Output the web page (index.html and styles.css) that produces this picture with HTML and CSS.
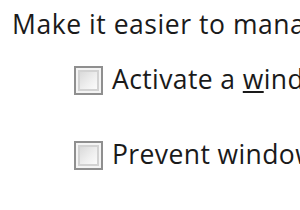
FILE: index.html
```html
<!DOCTYPE html>
<html lang="en">
<head>
    <meta charset="UTF-8">
    <title>Ease of Access</title>
    <link rel="stylesheet" href="styles.css">
</head>
<body>
    <div class="panel">
        <div class="heading">Make it easier to manage windows</div>
        <div class="option first">
            <span class="check"><span class="check-inner"></span></span>
            <span class="label">Activate a <u>w</u>indow by hovering over it with the mouse</span>
        </div>
        <div class="option">
            <span class="check"><span class="check-inner"></span></span>
            <span class="label">Prevent windows from being automatically arranged</span>
        </div>
    </div>
</body>
</html>
```

FILE: styles.css
```css
body {
    margin: 0;
    background: #fff;
    color: #1a1a1a;
    font-family: 'Open Sans', 'Noto Sans', sans-serif;
    overflow: hidden;
}

.panel {
    padding: 8px 0 0 12px;
    white-space: nowrap;
}

.heading {
    font-size: 26.5px;
    line-height: 32px;
    letter-spacing: 0.55px;
}

.option {
    display: flex;
    align-items: center;
    gap: 9px;
    margin-left: 62px;
    height: 75px;
}

.option.first {
    margin-top: 3px;
}

.check {
    box-sizing: border-box;
    width: 29px;
    height: 29px;
    border: 2px solid #8f8f8f;
    background: #f4f4f4;
    padding: 2px;
    flex-shrink: 0;
}

.check-inner {
    display: block;
    width: 100%;
    height: 100%;
    box-sizing: border-box;
    border: 2px solid #d2d2d2;
    background: linear-gradient(135deg, #dadada 0%, #f0f0f0 60%, #fbfbfb 100%);
}

.label {
    font-size: 26.5px;
    line-height: 32px;
    letter-spacing: 0.4px;
    margin-bottom: 4px;
}
```
